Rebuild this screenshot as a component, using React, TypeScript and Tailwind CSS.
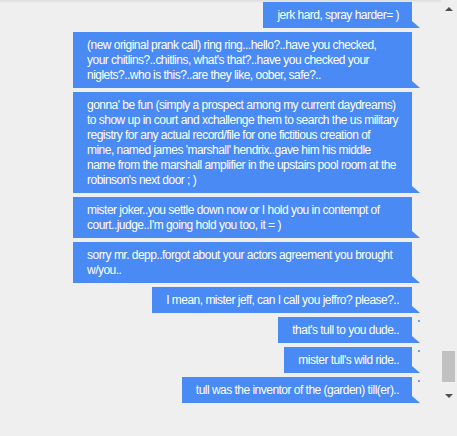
import React from 'react'

const messages: { text: string; dot?: boolean }[] = [
  { text: 'jerk hard, spray harder= )' },
  { text: "(new original prank call) ring ring...hello?..have you checked, your chitlins?..chitlins, what's that?..have you checked your niglets?..who is this?..are they like, oober, safe?.." },
  { text: "gonna' be fun (simply a prospect among my current daydreams) to show up in court and xchallenge them to search the us military registry for any actual record/file for one fictitious creation of mine, named james 'marshall' hendrix..gave him his middle name from the marshall amplifier in the upstairs pool room at the robinson's next door ; )" },
  { text: "mister joker..you settle down now or I hold you in contempt of court..judge..I'm going hold you too, it = )" },
  { text: 'sorry mr. depp..forgot about your actors agreement you brought w/you..' },
  { text: 'I mean, mister jeff, can I call you jeffro? please?..' },
  { text: "that's tull to you dude..", dot: true },
  { text: "mister tull's wild ride..", dot: true },
  { text: 'tull was the inventor of the (garden) till(er)..', dot: true },
]

const Bubble: React.FC<{ text: string; dot?: boolean }> = ({ text, dot }) => (
  <div className="relative max-w-[339px] bg-[#4a8af4] pl-[14px] pr-[13px] pt-[6px] pb-[5px] text-white text-[12px] leading-[15px] tracking-[-0.52px]">
    {text}
    <span className="absolute bottom-0 right-[-8px] w-0 h-0 border-l-[8px] border-l-[#4a8af4] border-t-[7px] border-t-transparent" />
    {dot && <span className="absolute top-[3px] right-[-8px] w-[2px] h-[2px] bg-[#6f9ff2]" />}
  </div>
)

export default function App() {
  return (
    <div
      className="w-[457px] h-[436px] flex overflow-hidden bg-[#efefef]"
      style={{ fontFamily: '"Liberation Sans", Arial, sans-serif' }}
    >
      {/* Messages */}
      <div className="relative flex-1 flex flex-col items-end gap-[4px] pt-[2px] pr-[29px]">
        <div className="absolute top-0 left-0 right-0 h-[3px] bg-gradient-to-b from-[#dcdcdc] to-transparent" />
        {messages.map((m, i) => (
          <Bubble key={i} text={m.text} dot={m.dot} />
        ))}
      </div>

      {/* Scrollbar */}
      <div className="w-[16px] flex flex-col items-center">
        <div className="mt-[7px] w-0 h-0 border-l-[4px] border-r-[4px] border-b-[4px] border-l-transparent border-r-transparent border-b-[#505050]" />
        <div className="flex-1" />
        <div className="w-[13px] h-[31px] bg-[#c1c1c1] mr-[2px]" />
        <div className="mt-[12px] mb-[38px] w-0 h-0 border-l-[4px] border-r-[4px] border-t-[4px] border-l-transparent border-r-transparent border-t-[#505050]" />
      </div>
    </div>
  )
}
